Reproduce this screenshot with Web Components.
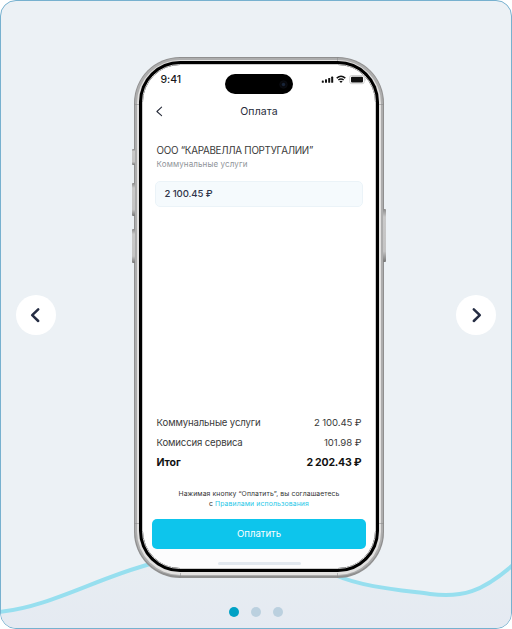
<!DOCTYPE html>
<html lang="ru">
<head>
<meta charset="utf-8">
<title>Оплата</title>
<style>
html,body{margin:0;background:#fff}
body{width:512px;height:629px;overflow:hidden;font-family:Inter,"Noto Sans",sans-serif;color:#333}
</style>
</head>
<body>
<payment-carousel></payment-carousel>
<script>
function define(name, html, setup) {
  const tpl = document.createElement('template');
  tpl.innerHTML = html;
  customElements.define(name, class extends HTMLElement {
    connectedCallback() {
      if (this.shadowRoot) return;
      this.attachShadow({ mode: 'open' }).append(tpl.content.cloneNode(true));
      if (setup) setup(this, this.shadowRoot);
    }
  });
}

/* One line of text whose tracking is adjusted so that it spans the "w" attribute in pixels. */
define('fit-text', `
<style>:host{display:block;white-space:nowrap;line-height:1}span{display:inline-block}</style>
<span><slot></slot></span>`, (el, root) => {
  const span = root.querySelector('span');
  const w = parseFloat(el.getAttribute('w'));
  const n = el.textContent.length;
  const now = span.getBoundingClientRect().width;
  const gap = (w - now) / n;
  span.style.letterSpacing = gap.toFixed(3) + 'px';
});

define('nav-arrow', `
<style>
:host{display:flex;align-items:center;justify-content:center;width:40px;height:40px;border-radius:50%;background:#fff;flex:none}
:host([dir=next]) svg{transform:scaleX(-1)}
</style>
<svg width="40" height="40" viewBox="0 0 40 40" fill="none" stroke="#252d43" stroke-width="2.5" stroke-linecap="round" stroke-linejoin="round"><path d="M22.2 14.4 16.2 20.2l6 5.8"/></svg>`);

define('page-dots', `
<style>
:host{display:flex;justify-content:center;gap:12px}
i{width:10px;height:10px;border-radius:50%;background:#bbd0df}
i:first-of-type{background:#00a1c5}
</style><i></i><i></i><i></i>`);

define('status-bar', `
<style>
:host{display:grid;grid-template-columns:65.5px 68px 1fr;height:20px;padding:9px 9px 0 17px;color:#17181a}
.time{font:500 10.5px Inter,sans-serif;padding:.6px 0 0 .5px}
.island{background:#000;border-radius:10px;display:flex;align-items:center;justify-content:flex-end}
.island svg{margin-right:5px}
.icons{justify-self:end}
svg{display:block}
</style>
<div class="time"><fit-text w="20.5">9:41</fit-text></div>
<div class="island"><svg width="9" height="9" viewBox="0 0 9 9"><circle cx="4.5" cy="4.5" r="3.8" fill="#08090d" stroke="#10131a" stroke-width=".6"/><circle cx="4.5" cy="4.5" r="1.7" fill="#182438"/></svg></div>
<svg class="icons" width="46" height="12" viewBox="0 0 46 12">
<g fill="#111"><rect x="1.8" y="6.5" width="2" height="2.3" rx=".6"/><rect x="5" y="5.3" width="2" height="3.5" rx=".6"/><rect x="8.2" y="4" width="2" height="4.8" rx=".6"/><rect x="11.2" y="2.6" width="2" height="6.2" rx=".6"/></g>
<g fill="none" stroke="#111" stroke-width="1.5"><path d="M16.7 4.1q4.3-3.5 8.6 0"/><path d="M18.3 6q2.7-2.2 5.4 0"/></g><path d="M19.4 7.2q1.6-1 3.2 0L21 8.9z" fill="#111"/>
<rect x="29.7" y="1.5" width="14.6" height="8.2" rx="2" fill="none" stroke="#c4c4c4" stroke-width=".8"/><rect x="31" y="2.8" width="12" height="5.6" rx="1" fill="#111"/><path d="M45 4.2q1.2 1.4 0 2.8z" fill="#bbb"/>
</svg>`);

define('screen-header', `
<style>
:host{display:grid;grid-template-columns:20px 1fr 20px;align-items:center;height:20px;margin:7.5px 10px 0 10px;color:#292d3b}
fit-text{justify-self:center;font-size:10.5px}
svg{display:block}
</style>
<svg width="14" height="14" viewBox="0 0 14 14" fill="none" stroke="#292d3b" stroke-width="1.1" stroke-linecap="round" stroke-linejoin="round"><path d="M8.6 2.2 3.9 6.5l4.7 4.2"/></svg>
<fit-text w="37.5">Оплата</fit-text>`);

define('amount-field', `
<style>:host{display:flex;align-items:center;height:26px;box-sizing:border-box;border:1px solid #ebf3f8;border-radius:5px;background:#f5fafd;padding-left:8.5px;color:#30354a;font-size:9.6px;font-weight:500}</style>
<slot></slot>`);

define('sum-row', `
<style>:host{display:flex;justify-content:space-between;align-items:center;height:20px;font-size:9.6px;color:#3a3a3a}
:host([total]){font-weight:700;font-size:10.5px;color:#111}</style>
<slot name="label"></slot><slot name="value"></slot>`);

define('pay-button', `
<style>:host{display:flex;align-items:center;justify-content:center;height:30px;border-radius:5px;background:#0dc5ec;color:#fff;font-size:9.6px}</style>
<slot></slot>`);

define('payment-screen', `
<style>
:host{display:flex;flex-direction:column;height:100%;background:linear-gradient(#fff 0 483px,#fcfcfd 483px)}
.payee{margin:24.5px 13.6px 0;display:grid;gap:4.4px;font-size:9.8px;color:#3a3a3a}
.sub{font-size:8px;color:#8f9499}
amount-field{margin:12.1px 12px 0}
.sum{margin:auto 13.6px 0}
.legal{display:grid;justify-items:center;gap:3.2px;font-size:6.8px;color:#333;margin:18.5px 0 11px}
.line{display:flex}.line span{color:#1fc8e8}
.line b{font-weight:400;margin-right:2px;line-height:1}
pay-button{margin:0 9px}
.home{width:83px;height:3px;border-radius:2px;background:#e2e8ef;margin:13px auto 2.8px}
</style>
<status-bar></status-bar>
<screen-header></screen-header>
<div class="payee"><fit-text w="156.5">ООО “КАРАВЕЛЛА ПОРТУГАЛИИ”</fit-text><fit-text class="sub" w="91">Коммунальные услуги</fit-text></div>
<amount-field><fit-text w="48">2 100.45 ₽</fit-text></amount-field>
<div class="sum">
<sum-row><fit-text slot="label" w="104">Коммунальные услуги</fit-text><fit-text slot="value" w="47.5">2 100.45 ₽</fit-text></sum-row>
<sum-row><fit-text slot="label" w="86">Комиссия сервиса</fit-text><fit-text slot="value" w="37.5">101.98 ₽</fit-text></sum-row>
<sum-row total><fit-text slot="label" w="24">Итог</fit-text><fit-text slot="value" w="55">2 202.43 ₽</fit-text></sum-row>
</div>
<div class="legal"><fit-text w="161">Нажимая кнопку “Оплатить”, вы соглашаетесь</fit-text><div class="line"><b>с</b><span><fit-text w="94">Правилами использования</fit-text></span></div></div>
<pay-button><fit-text w="44">Оплатить</fit-text></pay-button>
<div class="home"></div>`);

define('phone-frame', `
<style>
:host{display:block;position:relative;width:250px;height:520.5px}
.metal{box-sizing:border-box;height:100%;border-radius:46px;padding:1.4px;background:#8f8f8f}
.mid{box-sizing:border-box;height:100%;border-radius:44.6px;padding:1.3px;background:#adadad}
.light{box-sizing:border-box;height:100%;border-radius:43.3px;padding:1.4px 2.1px 2.6px;background:#e2e1e0}
.black{box-sizing:border-box;height:100%;border-radius:41px;padding:3.2px;background:#000}
.screen{box-sizing:border-box;height:100%;border-radius:37.8px;border:.8px solid #ccc;overflow:hidden;background:#fff}
.key{position:absolute;width:3px;background:linear-gradient(#8b8b8b,#c9c9c9 15%,#c4c4c4 80%,#777);border-radius:1px}
.l{left:-2px}.r{right:-2px}
.band{position:absolute;background:#8888}
.h{width:5px;height:1px}.v{width:1px;height:4px}
</style>
<div class="key l" style="top:92px;height:16px"></div>
<div class="key l" style="top:126px;height:33px"></div>
<div class="key l" style="top:172px;height:34px"></div>
<div class="key r" style="top:152px;height:53px"></div>
<div class="metal"><div class="mid"><div class="light"><div class="black"><div class="screen"><slot></slot></div></div></div></div></div>
<i class="band h" style="left:0;top:47px"></i><i class="band h" style="right:0;top:47px"></i>
<i class="band h" style="left:0;bottom:54px"></i><i class="band h" style="right:0;bottom:54px"></i>
<i class="band v" style="left:203px;top:0"></i><i class="band v" style="left:46px;bottom:0;height:5px"></i><i class="band v" style="left:203px;bottom:0;height:5px"></i>`);

define('payment-carousel', `
<style>
:host{display:block;position:relative;box-sizing:border-box;width:512px;height:629px;border:1px solid #77b1cf;border-radius:16px;overflow:hidden;background:#ecf1f5}
.wave{position:absolute;left:-1px;top:-1px}
.row{position:relative;display:flex;align-items:flex-start;justify-content:space-between;padding:0 15px;height:605.5px}
nav-arrow{margin-top:294px}
phone-frame{margin:56px -3px 0 3px}
page-dots{position:relative}
</style>
<svg class="wave" width="512" height="629" viewBox="0 0 512 629">
<defs><linearGradient id="g" x1="0" y1="565" x2="0" y2="629" gradientUnits="userSpaceOnUse"><stop offset="0" stop-color="#e7edf2"/><stop offset="1" stop-color="#e5eaf2"/></linearGradient></defs>
<path d="M0 612C49 607 95 579 145 565H335V575C362 587 400 590 430 594C462 598 482 592 513 565V629H0z" fill="url(#g)"/>
<g fill="none" stroke="#97dfef" stroke-width="4"><path d="M-1 612C49 607 95 579 150 564"/><path d="M335 575C362 587 400 590 430 594C462 598 482 592 513 565"/></g>
</svg>
<div class="row"><nav-arrow></nav-arrow><phone-frame><payment-screen></payment-screen></phone-frame><nav-arrow dir="next"></nav-arrow></div>
<page-dots></page-dots>`);
</script>
</body>
</html>
